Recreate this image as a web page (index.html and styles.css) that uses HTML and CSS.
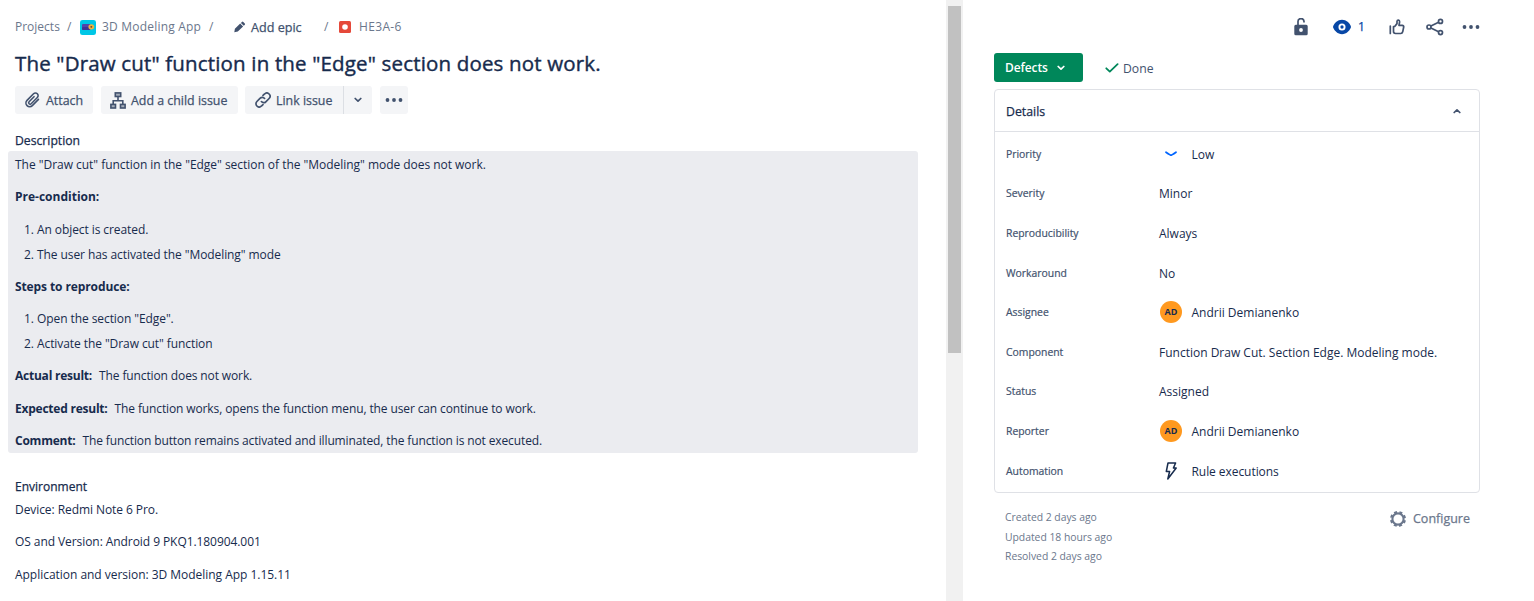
FILE: index.html
```html
<!DOCTYPE html>
<html lang="en">
<head>
<meta charset="utf-8">
<title>HE3A-6</title>
<link rel="stylesheet" href="styles.css">
</head>
<body>
<main class="issue">
  <nav class="crumbs">
    <span>Projects</span>
    <span class="slash">/</span>
    <svg width="16" height="15" viewBox="0 0 16 16" preserveAspectRatio="none"><rect width="16" height="16" rx="2.500" fill="#00c7e6"/><rect x="2" y="4.200" width="8.500" height="6.500" rx="1" fill="#5243aa"/><rect x="2" y="7.400" width="8" height="3.300" rx="1" fill="#403294"/><circle cx="11.300" cy="7.300" r="2.900" fill="#f0b43c"/><circle cx="11.300" cy="7.300" r="1" fill="#5e4a3a"/></svg>
    <span class="crumb-app">3D Modeling App</span>
    <span class="slash">/</span>
    <svg width="12" height="12" viewBox="0 0 12 12"><path d="M.3 11.200l.6-3.400 5.300-5.200 2.900 2.900-5.300 5.100zM6.900 1.900l1-1q.7-.6 1.400 0l1.500 1.500q.6.700 0 1.400l-1 1z" fill="#42526e"/></svg>
    <span class="crumb-epic">Add epic</span>
    <span class="slash">/</span>
    <svg width="12" height="12" viewBox="0 0 12 12"><rect width="12" height="12" rx="1.500" fill="#e5493a"/><circle cx="6" cy="6" r="2.800" fill="#fff"/></svg>
    <span class="crumb-key">HE3A-6</span>
  </nav>
  <h1 class="title">The "Draw cut" function in the "Edge" section does not work.</h1>
  <div class="toolbar">
    <button class="btn btn-attach"><svg width="17" height="18" viewBox="0 0 18 18" fill="none" stroke="#42526e" stroke-width="1.700" stroke-linecap="round" stroke-linejoin="round"><path d="M15.300 8.300l-6.500 6.600a3.900 3.900 0 0 1-5.600-5.500l6.900-7a2.800 2.800 0 0 1 4 4l-6.500 6.600a1.500 1.500 0 0 1-2.200-2.200l5.200-5.300"/></svg><span>Attach</span></button>
    <button class="btn btn-child"><svg width="16" height="17" viewBox="0 0 16 17" stroke="#42526e" stroke-width="1.600"><path d="M8 5v3.600M3.200 12V8.700h9.600V12" fill="none"/><g fill="#a5adba"><rect x="5.300" y=".9" width="5.400" height="3.600"/><rect x=".9" y="12.400" width="4.600" height="3.600"/><rect x="10.500" y="12.400" width="4.600" height="3.600"/></g></svg><span>Add a child issue</span></button>
    <button class="btn btn-link"><svg width="16" height="16" viewBox="0 0 16 16" fill="none" stroke="#42526e" stroke-width="1.700" stroke-linecap="round"><path d="M6.400 9.600a2.900 2.900 0 0 0 4.400.2l3.300-3.300a3.100 3.100 0 0 0-4.500-4.500L8 3.400M9.600 6.400a2.900 2.900 0 0 0-4.400-.2L1.900 9.500a3.100 3.100 0 0 0 4.500 4.500L8 12.600"/></svg><span>Link issue</span></button>
    <button class="btn btn-drop"><svg width="8" height="6" viewBox="0 0 8 6" fill="none" stroke="#42526e" stroke-width="1.700" stroke-linecap="round" stroke-linejoin="round"><path d="M1.200 1.500L4 4.200l2.800-2.700"/></svg></button>
    <button class="btn btn-more"><svg width="18" height="4" viewBox="0 0 18 4" fill="#42526e"><circle cx="2.500" cy="2" r="1.900"/><circle cx="9" cy="2" r="1.900"/><circle cx="15.500" cy="2" r="1.900"/></svg></button>
  </div>
  <h2 class="label label-desc">Description</h2>
  <section class="description">
    <p class="lead">The "Draw cut" function in the "Edge" section of the "Modeling" mode does not work.</p>
    <p><b class="pre">Pre-condition:</b></p>
    <ol>
      <li><span class="num">1.</span><span>An object is created.</span></li>
      <li><span class="num">2.</span><span>The user has activated the "Modeling" mode</span></li>
    </ol>
    <p><b class="steps">Steps to reproduce:</b></p>
    <ol>
      <li><span class="num">1.</span><span>Open the section "Edge".</span></li>
      <li><span class="num">2.</span><span>Activate the "Draw cut" function</span></li>
    </ol>
    <p class="pair"><b>Actual result:</b><span>The function does not work.</span></p>
    <p class="pair"><b>Expected result:</b><span>The function works, opens the function menu, the user can continue to work.</span></p>
    <p class="pair"><b>Comment:</b><span>The function button remains activated and illuminated, the function is not executed.</span></p>
  </section>
  <h2 class="label label-env">Environment</h2>
  <section class="environment">
    <p>Device: Redmi Note 6 Pro.</p>
    <p class="os">OS and Version: Android 9 PKQ1.180904.001</p>
    <p class="app">Application and version: 3D Modeling App 1.15.11</p>
  </section>
</main>
<div class="scrollbar"><div class="thumb"></div></div>
<aside class="side">
  <div class="actions">
    <svg width="14" height="18" viewBox="0 0 14 18"><path d="M4 7.500V3.800a3 3 0 0 1 6-.4v1" fill="none" stroke="#42526e" stroke-width="1.700"/><path fill-rule="evenodd" d="M1.800 6.700h10.400q1.500 0 1.500 1.500v7.500q0 1.500-1.500 1.500H1.800Q.3 17.200.3 15.700V8.200q0-1.500 1.500-1.500zM7 10.100a1.900 1.900 0 1 0 0 3.800 1.900 1.900 0 0 0 0-3.800z" fill="#42526e"/></svg>
    <svg width="18" height="16" viewBox="0 0 18 16"><path d="M9 .8C4.600.8 1.400 4.300.2 7c-.2.600-.2 1.200 0 1.800C1.400 11.700 4.600 15.200 9 15.200s7.600-3.500 8.800-6.400c.2-.6.2-1.200 0-1.800C16.600 4.300 13.400.8 9 .8z" fill="#0747a6"/><circle cx="9" cy="8" r="2.600" fill="none" stroke="#fff" stroke-width="1.900"/></svg>
    <span class="watch">1</span>
    <svg width="16" height="16" viewBox="0 0 16 16" fill="none" stroke="#42526e" stroke-width="1.700" stroke-linejoin="round" stroke-linecap="round"><path d="M1.300 7v7.500M4.500 7.500h1.200L8 4.600V2.300Q8.200.9 9.400 1q1.300.2 1.200 2L10 6.300h3.200q1.700.2 1.500 1.700l-1 4.800q-.4 1.700-1.900 1.700H6.500q-2-.1-2-2z"/></svg>
    <svg width="18" height="18" viewBox="0 0 18 18" fill="none" stroke="#42526e" stroke-width="1.700"><circle cx="3" cy="9" r="2"/><circle cx="14.500" cy="3.400" r="2"/><circle cx="14.500" cy="14.600" r="2"/><path d="M4.900 8.100l7.700-3.800M4.900 9.900l7.700 3.800"/></svg>
    <svg width="18" height="4" viewBox="0 0 18 4" fill="#42526e"><circle cx="2.500" cy="2" r="1.900"/><circle cx="9" cy="2" r="1.900"/><circle cx="15.500" cy="2" r="1.900"/></svg>
  </div>
  <div class="status-row">
    <button class="status"><span>Defects</span><svg width="8" height="6" viewBox="0 0 8 6" fill="none" stroke="#fff" stroke-width="1.700" stroke-linecap="round" stroke-linejoin="round"><path d="M1.200 1.500L4 4.200l2.800-2.700"/></svg></button>
    <svg width="14" height="10" viewBox="0 0 14 10" fill="none" stroke="#00875a" stroke-width="1.800" stroke-linecap="round" stroke-linejoin="round"><path d="M1.300 5.300l3.500 3.300L12.600 1.200"/></svg>
    <span class="done">Done</span>
  </div>
  <section class="details">
    <header class="details-head"><span>Details</span><svg width="8" height="6" viewBox="0 0 8 6" fill="none" stroke="#42526e" stroke-width="1.700" stroke-linecap="round" stroke-linejoin="round"><path d="M1.200 4.500L4 1.800l2.800 2.700"/></svg></header>
    <dl class="fields">
      <div class="field"><dt>Priority</dt><dd><span class="ico"><svg width="12" height="6" viewBox="0 0 12 6" fill="none" stroke="#0065ff" stroke-width="1.800" stroke-linecap="round" stroke-linejoin="round"><path d="M1 1.200q4.500 3 5 3t5-3"/></svg></span><span>Low</span></dd></div>
      <div class="field"><dt>Severity</dt><dd><span>Minor</span></dd></div>
      <div class="field"><dt>Reproducibility</dt><dd><span>Always</span></dd></div>
      <div class="field"><dt>Workaround</dt><dd><span>No</span></dd></div>
      <div class="field"><dt>Assignee</dt><dd><span class="ico"><span class="avatar">AD</span></span><span>Andrii Demianenko</span></dd></div>
      <div class="field"><dt>Component</dt><dd><span>Function Draw Cut. Section Edge. Modeling mode.</span></dd></div>
      <div class="field"><dt>Status</dt><dd><span>Assigned</span></dd></div>
      <div class="field"><dt>Reporter</dt><dd><span class="ico"><span class="avatar">AD</span></span><span>Andrii Demianenko</span></dd></div>
      <div class="field"><dt>Automation</dt><dd><span class="ico"><svg width="12" height="18" viewBox="0 0 12 18" fill="none" stroke="#172b4d" stroke-width="1.500" stroke-linejoin="round"><path d="M3 1h7.600L8.400 6h2.800L2.800 17 4.600 9.500H1.300z"/></svg></span><span class="rule">Rule executions</span></dd></div>
    </dl>
  </section>
  <footer class="foot">
    <div class="dates">
      <span>Created 2 days ago</span>
      <span>Updated 18 hours ago</span>
      <span>Resolved 2 days ago</span>
    </div>
    <button class="configure"><svg width="16" height="16" viewBox="0 0 16 16"><circle cx="8" cy="8" r="5.600" fill="none" stroke="#6b778c" stroke-width="2.100"/><circle cx="8" cy="8" r="7" fill="none" stroke="#6b778c" stroke-width="2" stroke-dasharray="3 2.498" stroke-dashoffset="-1.250"/></svg><span>Configure</span></button>
  </footer>
</aside>
</body>
</html>
```
FILE: styles.css
```css
* { box-sizing: border-box; margin: 0; padding: 0; }
body {
  display: flex;
  width: 1534px;
  height: 601px;
  overflow: hidden;
  background: #fff;
  color: #172b4d;
  font: 400 12px/20px "Open Sans", "Noto Sans", sans-serif;
  white-space: nowrap;
}
button { border: 0; background: none; font: inherit; color: inherit; display: flex; align-items: center; }
svg { display: block; flex: none; }

/* Issue column */
.issue { flex: none; width: 946px; padding: 16px 0 0 15px; }
.crumbs {
  display: grid;
  grid-template-columns: 52px 13px 22px 107px 25px 17px 73px 15px 20px auto;
  align-items: center;
  height: 20px;
  color: #6b778c;
}
.crumb-app { letter-spacing: .2px; }
.crumb-key { letter-spacing: .35px; }
.crumb-epic { padding-top: 2px; color: #42526e; font-size: 12.600px; -webkit-text-stroke: .25px; }
.title { height: 28px; margin-top: 13px; font-size: 20.500px; font-weight: 400; line-height: 28px; letter-spacing: .16px; -webkit-text-stroke: .4px; }
.toolbar { display: flex; height: 28px; margin-top: 9px; color: #42526e; font-size: 12.400px; -webkit-text-stroke: .25px; }
.btn { height: 28px; background: #f4f5f7; border-radius: 3px; }
.btn span { padding-top: 2px; }
.btn-attach { width: 78px; padding-left: 9px; gap: 5px; }
.btn-child { width: 137px; margin-left: 8px; padding-left: 9px; gap: 5px; }
.btn-link { width: 98px; margin-left: 7px; padding-left: 10px; gap: 5px; border-radius: 3px 0 0 3px; }
.btn-drop { width: 28px; margin-left: 1px; justify-content: center; border-radius: 0 3px 3px 0; box-shadow: -1px 0 #dcdfe4; }
.btn-more { width: 28px; margin-left: 8px; justify-content: center; }
.label { height: 20px; font-size: 12.200px; font-weight: 400; -webkit-text-stroke: .25px; }
.label-desc { margin-top: 17px; }
.description { width: 910px; height: 302px; margin: 0 0 0 -7px; padding: 4px 7px 0; background: #ebecf0; border-radius: 3px; letter-spacing: -.08px; }
.description b { letter-spacing: -.1px; }
.description .pre { letter-spacing: 0; }
.description .lead { letter-spacing: -.03px; }
.description p + p, .description ol, .description ol + p, .environment p + p { margin-top: 12.300px; }
.description li { display: flex; }
.description li + li { margin-top: 5px; }
.num { width: 22px; padding-left: 9px; }
.description .pair { display: flex; gap: 7px; letter-spacing: -.12px; }
.pair b { letter-spacing: -.23px; }
.label-env { margin-top: 24px; font-size: 12px; }
.environment { margin-top: 3px; letter-spacing: -.07px; }
.app { letter-spacing: -.03px; }

.scrollbar { flex: none; width: 17px; padding: 6px 2px 0; background: #f1f1f1; }
.thumb { height: 347px; background: #c1c1c1; }

/* Side column */
.side { width: 571px; padding: 16px 54px 0 31px; }
.actions {
  display: grid;
  grid-template-columns: 39px 25px 31px 37px 36px 18px;
  align-items: center;
  justify-content: end;
  height: 20px;
}
.watch { padding-top: 1px; color: #0747a6; -webkit-text-stroke: .25px; }
.status-row { display: flex; align-items: center; height: 29px; margin-top: 17px; }
.status { width: 89px; height: 29px; margin-right: 22px; padding-left: 11px; gap: 9px; color: #fff; background: #00875a; border-radius: 3px; font-weight: 600; letter-spacing: -.1px; }
.done { margin-left: 4px; padding-top: 2px; color: #42526e; font-size: 12.200px; }
.details { height: 404px; margin-top: 7px; border: 1px solid #dfe1e6; border-radius: 4px; }
.details-head { display: flex; justify-content: space-between; align-items: center; height: 42px; padding: 0 18px 0 11px; border-bottom: 1px solid #dfe1e6; font-size: 12.300px; -webkit-text-stroke: .25px; }
.details-head span { padding-top: 2px; }
.fields { padding-top: 2px; }
.field { display: flex; height: 39.600px; align-items: center; padding-left: 11px; }
.field dt { width: 153px; color: #42526e; font-size: 10.400px; -webkit-text-stroke: .2px; }
.field dd { display: flex; align-items: center; }
.field dd > span:last-child { padding-top: 2px; }
.field dd > .rule { padding-top: 0; letter-spacing: -.06px; }
.field .ico { display: flex; justify-content: center; width: 24px; margin-right: 8.500px; }
.avatar { width: 22px; height: 22px; border-radius: 50%; background: #ff991f; color: #172b4d; font-size: 9px; font-weight: 700; line-height: 22px; text-align: center; }
.foot { display: flex; justify-content: space-between; align-items: flex-start; padding: 15px 10px 0 11px; color: #6b778c; }
.dates { display: grid; font-size: 10.400px; line-height: 19.500px; letter-spacing: -.03px; }
.configure { gap: 7px; height: 22px; font-size: 12.500px; -webkit-text-stroke: .25px; }
```
